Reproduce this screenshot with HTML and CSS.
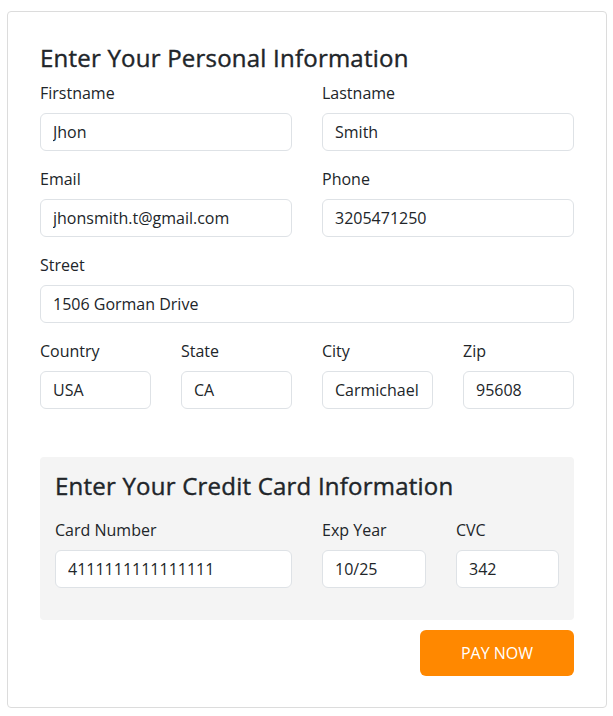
FILE: index.html
```html
<!DOCTYPE html>
<html lang="en">
<head>
<meta charset="utf-8">
<title>Checkout</title>
<link rel="stylesheet" href="styles.css">
</head>
<body>
<form class="card">
  <h3 class="title">Enter Your Personal Information</h3>
  <div class="row two">
    <div class="field"><label>Firstname</label><input class="input" value="Jhon"></div>
    <div class="field"><label>Lastname</label><input class="input" value="Smith"></div>
  </div>
  <div class="row two">
    <div class="field"><label>Email</label><input class="input" value="jhonsmith.t@gmail.com"></div>
    <div class="field"><label>Phone</label><input class="input" value="3205471250"></div>
  </div>
  <div class="row one">
    <div class="field"><label>Street</label><input class="input" value="1506 Gorman Drive"></div>
  </div>
  <div class="row four">
    <div class="field"><label>Country</label><input class="input" value="USA"></div>
    <div class="field"><label>State</label><input class="input" value="CA"></div>
    <div class="field"><label>City</label><input class="input" value="Carmichael"></div>
    <div class="field"><label>Zip</label><input class="input" value="95608"></div>
  </div>
  <div class="cc">
    <h3 class="title cc-title">Enter Your Credit Card Information</h3>
    <div class="row three">
      <div class="field"><label>Card Number</label><input class="input" value="4111111111111111"></div>
      <div class="field"><label>Exp Year</label><input class="input" value="10/25"></div>
      <div class="field"><label>CVC</label><input class="input" value="342"></div>
    </div>
  </div>
  <div class="actions">
    <button type="button" class="pay">PAY NOW</button>
  </div>
</form>
</body>
</html>
```
FILE: styles.css
```css
* { box-sizing: border-box; }
body {
  margin: 0;
  font-family: "Open Sans", "Noto Sans", sans-serif;
  color: #212529;
  background: #fff;
}
.card {
  width: 600px;
  margin: 11px 0 0 7px;
  border: 1px solid #dcdcdc;
  border-radius: 4px;
  padding: 32px 32px 31px;
}
.title {
  margin: 0 0 8px;
  font-size: 24px;
  font-weight: 400;
  letter-spacing: 0.22px;
  -webkit-text-stroke: 0.4px #212529;
  line-height: 1.2;
  color: #212529;
}
.row {
  display: grid;
  column-gap: 30px;
}
.two { grid-template-columns: 1fr 1fr; }
.one { grid-template-columns: 1fr; }
.four { grid-template-columns: repeat(4, 1fr); }
.three { grid-template-columns: 237px 104px 103px; }
.field {
  display: flex;
  flex-direction: column;
  margin-bottom: 16px;
  min-width: 0;
}
.field label {
  font-size: 16px;
  line-height: 24px;
  margin-bottom: 8px;
}
.input {
  width: 100%;
  height: 38px;
  border: 1px solid #dee2e6;
  border-radius: 6px;
  padding: 0 12px;
  font-family: inherit;
  font-size: 16px;
  color: #212529;
  background: #fff;
  outline: none;
}
.cc {
  margin-top: 32px;
  background: #f4f4f4;
  border-radius: 4px;
  padding: 15px 15px 16px;
}
.cc-title { margin-bottom: 17px; }
.actions {
  display: flex;
  justify-content: flex-end;
  margin-top: 10px;
}
.pay {
  width: 154px;
  height: 46px;
  border: 0;
  border-radius: 6px;
  background: #ff8800;
  color: #fff;
  font-family: inherit;
  font-size: 16px;
  cursor: pointer;
}
```
